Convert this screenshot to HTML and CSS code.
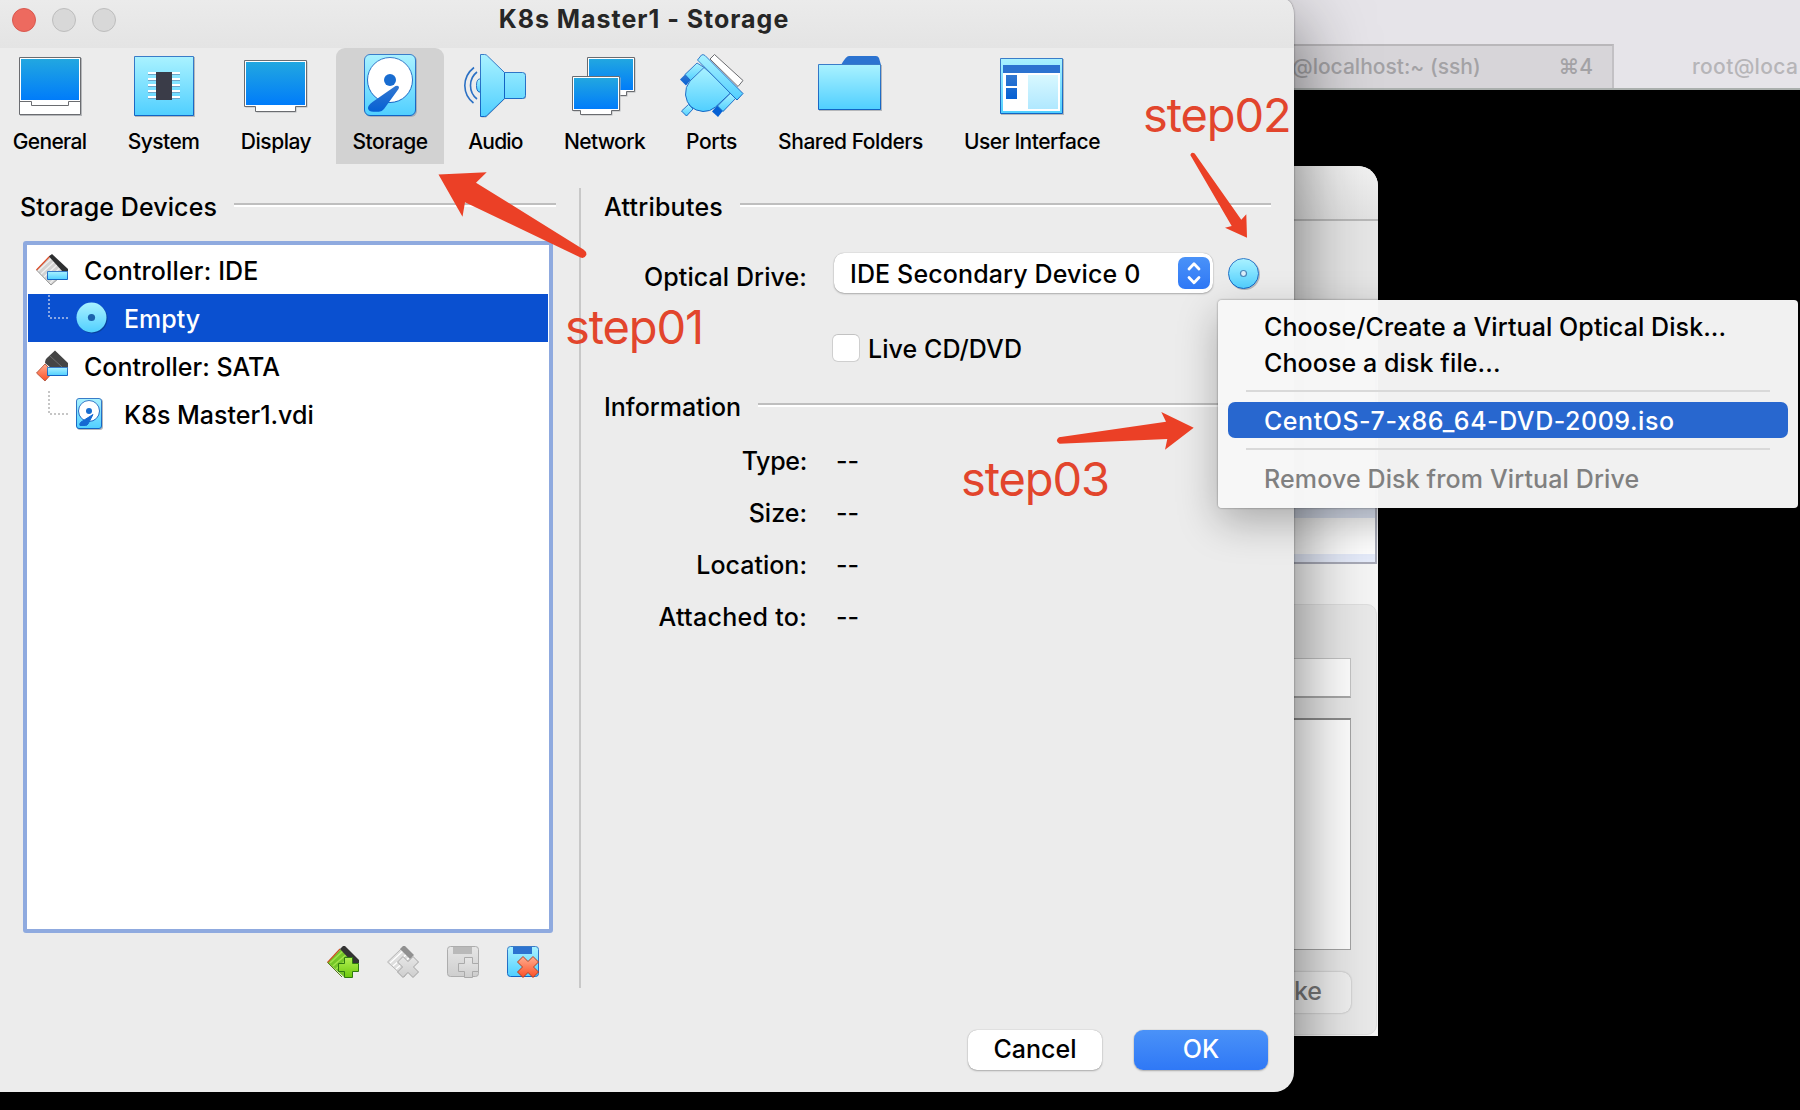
FILE: index.html
```html
<!DOCTYPE html>
<html lang="en">
<head>
<meta charset="utf-8">
<title>K8s Master1 - Storage</title>
<link rel="stylesheet" href="styles.css">
</head>
<body>
<div class="desktop">

  <section class="terminal">
    <div class="terminal-title"></div>
    <div class="terminal-tabs">
      <div class="tab tab-active"><span class="t">@localhost:~ (ssh)</span><span class="t">⌘4</span></div>
      <div class="tab"><span class="t t-root">root@loca</span></div>
    </div>
  </section>

  <section class="manager">
    <div class="manager-title"></div>
    <div class="manager-tools"></div>
    <div class="manager-list"></div>
    <div class="manager-panel">
      <div class="manager-field"></div>
      <div class="manager-area"></div>
      <div class="manager-button"><span class="t">ke</span></div>
    </div>
  </section>

  <main class="window">
    <header class="titlebar">
      <div class="lights"><i class="light light-close"></i><i class="light"></i><i class="light"></i></div>
      <h1 class="title"><span class="t">K8s Master1 - Storage</span></h1>
    </header>

    <svg class="defs" width="0" height="0">
      <defs>
        <linearGradient id="screen" x1="0" y1="0" x2="0" y2="1"><stop offset="0" stop-color="#22a7e0"/><stop offset="1" stop-color="#007cfa"/></linearGradient>
        <linearGradient id="sky" x1="0" y1="0" x2="0" y2="1"><stop offset="0" stop-color="#aaf2ff"/><stop offset="1" stop-color="#50cfff"/></linearGradient>
        <linearGradient id="navy" x1="0" y1="0" x2="0" y2="1"><stop offset="0" stop-color="#3277d0"/><stop offset="1" stop-color="#0560d4"/></linearGradient>
        <linearGradient id="edge" x1="0" y1="0" x2="0" y2="1"><stop offset="0" stop-color="#3a7cc8"/><stop offset="1" stop-color="#1264c4"/></linearGradient>
        <linearGradient id="pale" x1="0" y1="0" x2="0" y2="1"><stop offset="0" stop-color="#d8f8ff"/><stop offset="1" stop-color="#b0e8ff"/></linearGradient>
        <linearGradient id="green" x1="0" y1="0" x2="0" y2="1"><stop offset="0" stop-color="#b2ef52"/><stop offset="1" stop-color="#6cc90c"/></linearGradient>
        <linearGradient id="red" x1="0" y1="0" x2="0" y2="1"><stop offset="0" stop-color="#ffae90"/><stop offset="1" stop-color="#fb4f26"/></linearGradient>
        <linearGradient id="silver" x1="0" y1="0" x2="0" y2="1"><stop offset="0" stop-color="#e6e6e6"/><stop offset="1" stop-color="#cecece"/></linearGradient>
      </defs>
    </svg>

    <nav class="toolbar">
      <a class="tool">
        <svg class="tool-icon tool-icon-odd" viewBox="18 54 63 64"><path d="M20 58h62v58h-62z" fill="#b5b7ba"/><path d="M19.500 57.500h61v57h-61z" fill="#fff" stroke="#6a6c70"/><path d="M21 59h58v41H21z" fill="url(#screen)"/><path d="M19.500 101.500h12v4h37v-4h12" fill="none" stroke="#6a6c70"/></svg>
        <span class="t t-general">General</span>
      </a>
      <a class="tool">
        <svg class="tool-icon tool-icon-odd" viewBox="132 54 63 64"><path d="M135 57h60v60h-60z" fill="#b5b7ba"/><path d="M134.500 56.500h59v59h-59z" fill="url(#sky)" stroke="url(#edge)"/><path d="M148 72h32v2h-32zM148 78h32v2h-32zM148 84h32v2h-32zM148 90h32v2h-32zM148 96h32v2h-32z" fill="#fff"/><path d="M148 74h32v1h-32zM148 80h32v1h-32zM148 86h32v1h-32zM148 92h32v1h-32zM148 98h32v1h-32z" fill="#6fa6c8"/><path d="M156 72h16v28h-16z" fill="#3a3c48"/></svg>
        <span class="t t-system">System</span>
      </a>
      <a class="tool">
        <svg class="tool-icon" viewBox="244 54 64 64"><path d="M245.500 61.500h62v46h-11v5h-40v-5h-11z" fill="#b5b7ba"/><path d="M244.500 60.500h62v46h-11v5h-40v-5h-11z" fill="#fff" stroke="#6a6c70"/><path d="M246 62h59v43H246z" fill="url(#screen)"/></svg>
        <span class="t t-display">Display</span>
      </a>
      <a class="tool tool-active">
        <svg class="tool-icon" viewBox="358 54 64 64"><rect x="365" y="55" width="52" height="62" rx="6" fill="#a5adb8"/><rect x="364.500" y="54.500" width="51" height="61" rx="5.500" fill="url(#sky)" stroke="url(#edge)"/><circle cx="390" cy="80" r="22.500" fill="#fff" stroke="url(#edge)"/><circle cx="390" cy="80" r="6" fill="#186cd0"/><path d="M399 87.500q0-2.500-3.500-1.500l-23 16q-5 3.500-4.500 6.500q1 3.500 6 3.200h5q3 0 5-2.700l14.500-20z" fill="url(#navy)"/></svg>
        <span class="t t-storage">Storage</span>
      </a>
      <a class="tool">
        <svg class="tool-icon tool-icon-odd" viewBox="464 54 63 64"><path d="M474 67.500q-9 7-9.200 18q.2 11 8.700 17.500M477 72q-6.500 5-6.500 13.500q0 8.500 6.500 13.500" fill="none" stroke="#2b70c4" stroke-width="1.600"/><path d="M481 79h-2q-2.500 1-2.500 6.500t2.500 6.500h2z" fill="url(#sky)" stroke="url(#edge)"/><path d="M481.500 56h4.500l19 17h19q2 0 2 2v22q0 2-2 2h-19l-19 18.500h-4.500z" fill="#b5b7ba"/><path d="M480.500 54.500h4q2 0 3 1.500l17 16.500h18q3 0 3 3v20q0 3-3 3h-18l-17 16.500q-1 1.500-3 1.500h-4z" fill="url(#sky)" stroke="url(#edge)"/><path d="M504.500 72.500v26" stroke="#1264c4"/></svg>
        <span class="t t-audio">Audio</span>
      </a>
      <a class="tool">
        <svg class="tool-icon tool-icon-odd" viewBox="573 54 63 64"><path d="M588.500 58.500h47v34h-8v4h-20v-4h-19z" fill="#b5b7ba"/><path d="M587.500 57.500h47v34h-8v4h-20v-4h-19z" fill="#fff" stroke="#6a6c70"/><path d="M589 59h44v31h-44z" fill="url(#screen)"/><path d="M573.500 77.500h47v34h-8v4h-31v-4h-8z" fill="#b5b7ba"/><path d="M572.500 76.500h47v34h-8v4h-31v-4h-8z" fill="#fff" stroke="#6a6c70"/><path d="M574 78h44v31h-44z" fill="url(#screen)"/></svg>
        <span class="t t-network">Network</span>
      </a>
      <a class="tool">
        <svg class="tool-icon tool-icon-odd" viewBox="680 54 63 64"><path d="M710 59l4.500-4.500 28.500 26-5 6z" fill="#fff" stroke="#6a6c70"/><path d="M680 79.500l5-5 6 5-5 6z" fill="url(#navy)"/><path d="M685 74.500l12-11.500 8 5-14 13z" fill="url(#sky)" stroke="url(#edge)"/><path d="M712 111.500l5.500-6.500 6 5-5.500 7z" fill="#0560d4"/><path d="M717.500 106l13-13 6 4.500-13.500 14z" fill="url(#sky)" stroke="url(#edge)"/><path d="M681.500 111l7-6.500 4.500 4.500-6.500 7z" fill="url(#sky)" stroke="url(#edge)"/><path d="M704 67.500L690 81q-5 6-4.500 14q2 15 17.500 16.500q7 .3 12.500-4.500l16-15z" fill="url(#sky)" stroke="url(#edge)"/><path d="M697.500 60l4-5q1.500-1 3.500.5L743 93.500l-6 6.500z" fill="url(#sky)" stroke="url(#edge)"/></svg>
        <span class="t t-ports">Ports</span>
      </a>
      <a class="tool">
        <svg class="tool-icon" viewBox="818 54 64 64"><path d="M841 65q5-9 8-9h27q2 0 3 2l2 7z" fill="#2c73d0"/><path d="M819 65h63v46H819z" fill="#b5b7ba"/><path d="M818.500 64.500h62v45h-62z" fill="url(#sky)" stroke="url(#edge)"/></svg>
        <span class="t t-shared">Shared Folders</span>
      </a>
      <a class="tool">
        <svg class="tool-icon tool-icon-odd" viewBox="1000 54 63 64"><path d="M1001 59h63v56h-63z" fill="#b5b7ba"/><path d="M1000.500 58.500h62v55h-62z" fill="url(#sky)" stroke="url(#edge)"/><path d="M1003 73h57v38h-57z" fill="#fff"/><path d="M1003 65h57v8h-57z" fill="#2c73d0"/><path d="M1006 75h11v11h-11zM1006 88h11v11h-11z" fill="url(#navy)"/><path d="M1028 75h30v34h-30z" fill="url(#pale)"/></svg>
        <span class="t t-ui">User Interface</span>
      </a>
    </nav>

    <div class="panes">
      <section class="devices">
        <h2 class="heading heading-devices"><span class="t t-devices">Storage Devices</span><i class="rule"></i></h2>
        <ul class="tree">
          <li class="node">
            <svg class="node-icon" viewBox="0 0 32 32"><path d="M.5 16L15 1l16 16-16 14z" fill="#d2d2d2" stroke="#808080" stroke-width=".8"/><path d="M2 17l14-13M5 20l14-13M8 23L22 10M11 26l14-13M14 29l14-13" stroke="#f0f0f0" stroke-width="1.200"/><path d="M.5 16L14 2" stroke="#e0502c" stroke-width="1.200"/><path d="M13 2.500L16 0l16 15v3h-5z" fill="#2d2f30"/><path d="M11.500 17.500h20v8h-20z" fill="url(#sky)" stroke="url(#edge)"/></svg>
            <span class="t t-ide">Controller: IDE</span>
          </li>
          <li class="node node-child node-selected">
            <svg class="branch" viewBox="0 0 20 24"><path d="M1 0v23.500M2 23h18" fill="none" stroke="#b4c4ea" stroke-width="1.500" stroke-dasharray="2 2"/></svg>
            <svg class="node-icon" viewBox="0 0 32 32"><circle cx="16.500" cy="16.500" r="15" fill="#08409c"/><circle cx="15.500" cy="15.500" r="15" fill="url(#sky)"/><circle cx="15.500" cy="15.500" r="3.600" fill="#1c62ac"/></svg>
            <span class="t">Empty</span>
          </li>
          <li class="node">
            <svg class="node-icon" viewBox="0 0 32 32"><path d="M.5 23L9 14l8 8-8 9z" fill="url(#red)" stroke="#a84830" stroke-width=".8"/><path d="M9 13q0-4 3-6l7-6.500L32 13v5H15z" fill="#454545"/><path d="M14 6l12 11" stroke="#777" stroke-width=".8"/><path d="M11.500 17.500h20v8h-20z" fill="url(#sky)" stroke="url(#edge)"/></svg>
            <span class="t">Controller: SATA</span>
          </li>
          <li class="node node-child">
            <svg class="branch" viewBox="0 0 20 24"><path d="M1 0v23.500M2 23h18" fill="none" stroke="#b4b4b4" stroke-width="1.500" stroke-dasharray="2 2"/></svg>
            <svg class="node-icon" viewBox="0 0 32 32"><rect x="1" y="1" width="26" height="31" rx="3" fill="#b5b7ba"/><rect x=".5" y=".5" width="25" height="30" rx="2.500" fill="url(#sky)" stroke="url(#edge)"/><circle cx="13" cy="13" r="10.500" fill="#fff" stroke="url(#edge)"/><circle cx="13" cy="13" r="3" fill="#186cd0"/><path d="M17 16.500L5 24q-2 2-1 3.500h5.500q1.500 0 2.500-1.500z" fill="#1668d2" stroke="#1668d2"/></svg>
            <span class="t">K8s Master1.vdi</span>
          </li>
        </ul>
        <div class="actions">
          <svg class="action" viewBox="0 0 32 32"><path d="M.5 16.500L14 3l17 13-14 15z" fill="#74c628"/><path d="M3 17L17 4M6 20L21 7M9 23L24 10M12 26l14-13" stroke="#a0e24a" stroke-width="1.600"/><path d="M.5 16.500L13 3" stroke="#c85020" stroke-width="1.200" fill="none"/><path d="M.5 16.500L15 31" stroke="#5a7a1c" stroke-width="1" fill="none"/><path d="M13 3l3-3h2l14 14v3h-6z" fill="#333"/><path d="M17.500 11.500h8v6h6v8h-6v6h-8v-6h-6v-8h6z" fill="url(#green)" stroke="#2f7a10"/></svg>
          <svg class="action" viewBox="0 0 32 32"><path d="M.5 16L14 3l14 11-11 17z" fill="#dedede" stroke="#aaa" stroke-width=".8"/><path d="M3 17L17 4M6 20L21 7M9 23L24 10" stroke="#fff" stroke-width="1.300"/><path d="M13 3l3-3h2l9 9-4 4z" fill="#909090"/><path d="M16 10.500l5 5 5-5 5.500 5.500-5 5 5 5-5.500 5.500-5-5-5 5-5.500-5.500 5-5-5-5z" fill="url(#silver)" stroke="#a2a2a2"/></svg>
          <svg class="action" viewBox="0 0 32 32"><rect x=".5" y=".5" width="31" height="30" rx="3" fill="url(#silver)" stroke="#adadad"/><path d="M6 1h19v7H6z" fill="#b9b9b9"/><path d="M17.500 11.500h8v6h6v8h-6v6h-8v-6h-6v-8h6z" fill="url(#silver)" stroke="#aaa"/></svg>
          <svg class="action" viewBox="0 0 32 32"><rect x=".5" y=".5" width="31" height="30" rx="3" fill="url(#sky)" stroke="url(#edge)"/><path d="M6 1h19v7H6z" fill="#2c73d0"/><path d="M16 10.500l5 5 5-5 5.500 5.500-5 5 5 5-5.500 5.500-5-5-5 5-5.500-5.500 5-5-5-5z" fill="url(#red)" stroke="#b83c1c"/></svg>
        </div>
      </section>

      <section class="details">
        <h2 class="heading"><span class="t t-attributes">Attributes</span><i class="rule"></i></h2>
        <div class="drive">
          <label class="drive-label"><span class="t t-optical">Optical Drive:</span></label>
          <div class="select">
            <span class="t t-device">IDE Secondary Device 0</span>
            <svg class="stepper" viewBox="0 0 32 32"><path d="M11 12L16 6.800 21 12M11 20.500L16 25.700 21 20.500" fill="none" stroke="#fff" stroke-width="2.800" stroke-linecap="round" stroke-linejoin="round"/></svg>
          </div>
          <svg class="disc" viewBox="0 0 32 32"><circle cx="16.500" cy="16.500" r="15.500" fill="#b5b7ba"/><circle cx="15.500" cy="15.500" r="15" fill="url(#sky)" stroke="url(#edge)"/><circle cx="15.500" cy="15.500" r="3" fill="#dceefa" stroke="#4a86b8" stroke-width="1.200"/></svg>
        </div>
        <div class="live"><i class="checkbox"></i><span class="t t-live">Live CD/DVD</span></div>
        <h2 class="heading heading-info"><span class="t">Information</span><i class="rule"></i></h2>
        <dl class="facts">
          <dt><span class="t t-type">Type:</span></dt><dd>--</dd>
          <dt><span class="t">Size:</span></dt><dd>--</dd>
          <dt><span class="t">Location:</span></dt><dd>--</dd>
          <dt><span class="t t-attached">Attached to:</span></dt><dd>--</dd>
        </dl>
      </section>
    </div>

    <footer class="buttons">
      <button class="button">Cancel</button>
      <button class="button button-primary">OK</button>
    </footer>
  </main>

  <div class="menu">
    <div class="menu-item">Choose/Create a Virtual Optical Disk...</div>
    <div class="menu-item">Choose a disk file...</div>
    <hr class="menu-rule">
    <div class="menu-item menu-item-active">CentOS-7-x86_64-DVD-2009.iso</div>
    <hr class="menu-rule menu-rule-last">
    <div class="menu-item menu-item-disabled">Remove Disk from Virtual Drive</div>
  </div>

  <svg class="arrows" viewBox="0 0 1800 1110">
    <path d="M438.500 174.500L486.700 172.300 476 182.700 583.500 249.500Q587 252 586.300 255Q584.500 259 580.500 257.500L465 202.300 462.500 216.700Z"/>
    <path d="M1247 237.700L1246.300 214.300 1241.300 219.700 1194.700 153.500Q1191.500 151.500 1190.300 155L1231.700 226 1225 227.700Z"/>
    <path d="M1193.700 427.700L1161.300 412 1166 421.700 1059 437.300Q1054.500 441 1059.500 443.700L1167.300 439 1165 449.700Z"/>
  </svg>
  <div class="step step-1">step01</div>
  <div class="step step-2">step02</div>
  <div class="step step-3">step03</div>
</div>
</body>
</html>
```
FILE: styles.css
```css
* { box-sizing: border-box; }

body {
  margin: 0;
  background: #000;
  color: #000;
  font-family: Inter, "Liberation Sans", sans-serif;
  font-size: 25px;
  font-weight: 500;
}

h1, h2, ul, dl, dd { margin: 0; padding: 0; font-size: inherit; font-weight: inherit; }
svg { display: block; flex: none; overflow: visible; }
.t { white-space: pre; }
.defs { position: absolute; }

.desktop { position: relative; width: 1800px; height: 1110px; overflow: hidden; background: #000; }

/* Terminal behind everything */
.terminal { position: absolute; left: 1280px; top: 0; width: 520px; height: 90px; overflow: hidden; background: #e6e4e9; border-bottom: 2px solid #aaafad; }
.terminal-title { height: 44px; }
.terminal-tabs { display: flex; height: 44px; font-size: 21px; line-height: 45px; color: #b6b5b8; }
.tab { flex: none; padding-left: 78px; }
.tab-active { display: flex; justify-content: space-between; width: 334px; padding: 0 19px 0 12px; background: #d7d5d9; border-top: 2px solid #b9b7ba; border-right: 2px solid #c2c0c4; color: #a3a2a5; line-height: 42px; }
.t-root { letter-spacing: .35px; }

/* VirtualBox manager window */
.manager { position: absolute; left: 1200px; top: 166px; width: 178px; height: 870px; overflow: hidden; border-radius: 0 20px 0 0; background: #f5f5f5; }
.manager-title { height: 55px; background: linear-gradient(#f2f2f2, #e2e2e2); border-bottom: 2px solid #b8b8b8; }
.manager-tools { height: 134px; background: #e6e6e6; }
.manager-list { height: 209px; margin-right: 1px; border: 1px solid #a9abb8; border-width: 0 2px 2px 0; background: linear-gradient(#e9e9e9 0 146px, #dfe6f5 146px 163px, #fff 163px 199px, #e6ecfb 199px); }
.manager-panel { display: flex; flex-direction: column; height: 431px; margin: 40px 1px 0 0; padding: 53px 25px 0 0; background: #e9e9e9; border: 1px solid #dedede; border-radius: 0 10px 10px 0; }
.manager-field { height: 40px; background: #fff; border: 1px solid #c4c4c4; border-bottom: 2px solid #a8a8a8; }
.manager-area { height: 232px; margin-top: 20px; background: #fff; border: 1px solid #a4a4a4; border-top: 2px solid #8c8c8c; }
.manager-button { height: 41px; margin-top: 22px; padding-right: 29px; border-radius: 9px; background: #f1f1f1; box-shadow: 0 0 2px rgba(0,0,0,.3); color: #777; text-align: right; line-height: 39px; }

/* Settings window */
.window { position: absolute; left: 0; top: 0; width: 1294px; height: 1092px; border-radius: 0 8px 20px 0 / 0 16px 20px 0; background: #ececec; box-shadow: 0 0 2px rgba(0,0,0,.5), 0 24px 76px rgba(0,0,0,.55); }
.titlebar { display: grid; grid-template-columns: 12px 200px 864px 1fr; height: 48px; background: linear-gradient(#ebebeb, #e4e4e4); border-radius: 0 8px 0 0 / 0 16px 0 0; }
.lights { grid-column: 2; display: flex; gap: 16px; padding-top: 8px; }
.light { width: 24px; height: 24px; border: 1px solid #bdbdbd; border-radius: 50%; background: #d8d8d8; }
.light-close { border-color: #d9584f; background: #ed6a5f; }
.title { grid-column: 3; color: #262626; font-weight: 700; line-height: 38px; letter-spacing: .98px; text-align: center; }

.toolbar { display: grid; grid-template-columns: 107px 105px 104px 108px 87px 115px 83px 178px 169px; gap: 8px; height: 116px; margin-left: -4px; font-size: 21px; }
.tool { display: flex; flex-direction: column; align-items: center; padding-top: 6px; line-height: 26px; }
.tool-active { border-radius: 9px 9px 0 0; background: #d2d2d2; }
.tool-icon { width: 64px; height: 64px; margin-bottom: 11px; }
.tool-icon-odd { width: 63px; }
.t-general { letter-spacing: -.68px; }
.t-system { letter-spacing: -.57px; }
.t-display { letter-spacing: -.46px; }
.t-storage { letter-spacing: -.5px; }
.t-audio { letter-spacing: -.8px; }
.t-network { letter-spacing: -.67px; }
.t-ports { letter-spacing: -.36px; }
.t-shared { margin-left: 1px; letter-spacing: -.45px; }
.t-ui { margin-left: 1px; letter-spacing: -.5px; }

.panes { display: flex; height: 824px; padding-top: 24px; }
.devices { flex: none; width: 581px; padding: 0 26px 0 23px; border-right: 2px solid #c8c8c8; }
.details { flex: 1; padding: 0 24px 0 23px; }
.heading { display: flex; align-items: center; gap: 17px; height: 38px; line-height: 38px; }
.rule { flex: 1; height: 4px; margin-top: -4px; border-top: 2px solid #bebebe; background: #fff; }
.heading-devices { margin: 0 -3px; }
.t-devices, .t-optical { letter-spacing: .09px; }
.t-attributes { letter-spacing: .23px; }

.tree { height: 692px; margin-top: 15px; padding-top: 1px; list-style: none; background: #fff; border: 4px solid #8faadf; border-radius: 3px; }
.node { display: flex; align-items: center; height: 48px; padding-left: 9px; }
.node .t { padding-top: 2px; }
.node-icon { width: 32px; height: 32px; margin-right: 16px; }
.node-child { padding-left: 21px; }
.node-selected { margin: 0 1px; padding-left: 20px; background: #0a50d0; color: #fff; }
.branch { width: 20px; height: 24px; margin: -22px 8px 0 0; }
.t-ide { letter-spacing: .14px; }

.actions { display: flex; justify-content: flex-end; gap: 28px; margin-top: 13px; padding-right: 14px; }
.action { width: 32px; height: 32px; }

.drive { display: grid; grid-template-columns: 204px 379px 32px; column-gap: 26px; align-items: start; height: 40px; margin-top: 27px; }
.drive-label { padding: 4px 1px 0 0; line-height: 40px; text-align: right; }
.select { display: flex; align-items: center; justify-content: space-between; height: 40px; padding: 0 3px 0 16px; border-radius: 10px; background: #fff; box-shadow: 0 0 1px rgba(0,0,0,.35), 0 1px 2px rgba(0,0,0,.25); }
.t-device { padding-top: 2px; letter-spacing: .13px; }
.stepper { width: 32px; height: 32px; border-radius: 7px; background: linear-gradient(#4a92f8, #2f78f6); }
.disc { width: 32px; height: 32px; margin: 5px 0 0 -11px; }
.live { display: flex; align-items: center; gap: 8px; height: 28px; margin-top: 41px; padding-left: 228px; }
.t-live { padding-top: 2px; letter-spacing: .07px; }
.checkbox { width: 28px; height: 28px; border: 1px solid #cfcfcf; border-top-color: #c2c2c2; border-radius: 6px; background: #fff; }
.heading-info { margin-top: 26px; }
.facts { display: grid; grid-template-columns: 203px 1fr; column-gap: 29px; margin-top: 9px; line-height: 52px; }
.facts dt { text-align: right; }
.t-type { letter-spacing: -.3px; }
.t-attached { letter-spacing: .29px; }

.buttons { display: flex; justify-content: flex-end; gap: 32px; padding: 42px 26px 0 0; }
.button { width: 134px; height: 40px; padding: 0 0 2px; border: 0; border-radius: 9px; background: #fff; box-shadow: 0 0 1px rgba(0,0,0,.35), 0 1px 2px rgba(0,0,0,.25); color: #000; font: 500 25px/36px Inter, "Liberation Sans", sans-serif; }
.button-primary { background: linear-gradient(#4a92f8, #2f78f6); color: #fff; }

/* Context menu of the disc button */
.menu { position: absolute; left: 1218px; top: 300px; width: 580px; height: 208px; padding: 9px 10px 0; border-radius: 4px; background: rgba(247,247,247,.975); box-shadow: 0 0 2px rgba(0,0,0,.5), 0 14px 40px rgba(0,0,0,.28); }
.menu-item { height: 36px; padding-left: 36px; border-radius: 7px; line-height: 36px; letter-spacing: .09px; white-space: pre; }
.menu-rule { height: 2px; margin: 9px 18px 10px; border: 0; background: #d9d9d9; }
.menu-rule-last { margin: 10px 18px 11px; }
.menu-item-active { background: #2867cf; color: #fff; line-height: 38px; letter-spacing: .54px; }
.menu-item-disabled { color: #808080; letter-spacing: .13px; }

/* Annotations */
.arrows { position: absolute; left: 0; top: 0; width: 1800px; height: 1110px; fill: #eb4026; }
.step { position: absolute; color: #e2452c; font-size: 47px; font-weight: 400; line-height: 56px; letter-spacing: -1.1px; }
.step-1 { left: 565px; top: 299px; }
.step-2 { left: 1143px; top: 87px; }
.step-3 { left: 961px; top: 451px; }
```
